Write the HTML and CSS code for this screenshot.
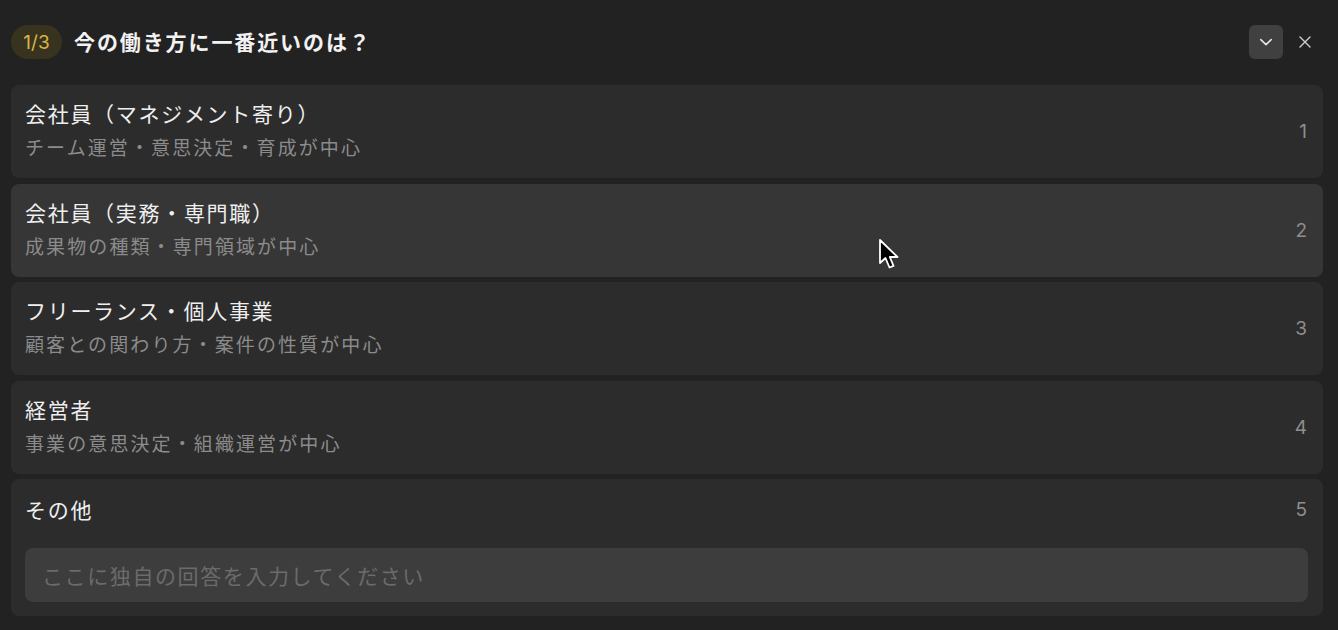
FILE: index.html
```html
<!DOCTYPE html>
<html lang="ja">
<head>
<meta charset="utf-8">
<link rel="stylesheet" href="styles.css">
</head>
<body>
<div class="panel">
  <header class="head">
    <span class="badge">1/3</span>
    <h1 class="title">今の働き方に一番近いのは？</h1>
    <button class="iconbtn chev" aria-label="collapse">
      <svg width="16" height="16" viewBox="0 0 16 16"><path d="M2.8 5.6 L8 10.6 L13.2 5.6" fill="none" stroke="#e6e6e6" stroke-width="1.6" stroke-linecap="round" stroke-linejoin="round"/></svg>
    </button>
    <button class="iconbtn close" aria-label="close">
      <svg width="14" height="14" viewBox="0 0 14 14"><path d="M2 2 L12 12 M12 2 L2 12" fill="none" stroke="#cfcfcf" stroke-width="1.4" stroke-linecap="round"/></svg>
    </button>
  </header>
  <div class="options">
    <div class="opt">
      <div class="txt"><div class="ot">会社員（マネジメント寄り）</div><div class="os">チーム運営・意思決定・育成が中心</div></div>
      <span class="num">1</span>
    </div>
    <div class="opt hover">
      <div class="txt"><div class="ot">会社員（実務・専門職）</div><div class="os">成果物の種類・専門領域が中心</div></div>
      <span class="num">2</span>
    </div>
    <div class="opt">
      <div class="txt"><div class="ot">フリーランス・個人事業</div><div class="os">顧客との関わり方・案件の性質が中心</div></div>
      <span class="num">3</span>
    </div>
    <div class="opt">
      <div class="txt"><div class="ot">経営者</div><div class="os">事業の意思決定・組織運営が中心</div></div>
      <span class="num">4</span>
    </div>
    <div class="opt other">
      <div class="otherrow"><div class="ot">その他</div><span class="num">5</span></div>
      <input class="field" type="text" placeholder="ここに独自の回答を入力してください">
    </div>
  </div>
</div>
<svg class="cursor" width="24" height="34" viewBox="0 0 24 34"><path d="M2 2 L2 25 L7.5 20 L11.5 29.5 L15.5 27.8 L11.8 19 L19.5 19 Z" fill="#000" stroke="#fff" stroke-width="1.8" stroke-linejoin="round"/></svg>
</body>
</html>
```
FILE: styles.css
```css
html, body { margin: 0; padding: 0; }
body {
  background: #222222;
  font-family: "Noto Sans CJK JP", "Noto Sans", sans-serif;
  color: #ececec;
  width: 1338px;
  height: 630px;
  overflow: hidden;
  position: relative;
}
.panel { padding: 25px 15px 0 11px; }
.head {
  display: flex;
  align-items: center;
  height: 34px;
  gap: 12px;
}
.badge {
  width: 51px;
  height: 34px;
  border-radius: 17px;
  background: #38331f;
  color: #d9b545;
  font-family: "Inter", "Noto Sans", sans-serif;
  font-size: 19px;
  display: flex;
  align-items: center;
  justify-content: center;
}
.title {
  margin: 0;
  font-size: 21px;
  font-weight: 700;
  letter-spacing: 1.9px;
  color: #f2f2f2;
  flex: 1;
  margin-top: -2px;
}
.iconbtn {
  border: 0;
  padding: 0;
  display: flex;
  align-items: center;
  justify-content: center;
  background: transparent;
}
.chev { width: 34px; height: 34px; border-radius: 6px; background: #404040; }
.close { width: 24px; height: 34px; margin-left: -2px; margin-right: 6px; }
.options {
  margin-top: 26px;
  display: flex;
  flex-direction: column;
  gap: 5.5px;
}
.opt {
  background: #2c2c2c;
  border-radius: 8px;
  height: 93px;
  box-sizing: border-box;
  padding: 0 16px 0 14px;
  display: flex;
  align-items: center;
}
.opt.hover { background: #363636; }
.txt { flex: 1; margin-top: -3px; }
.ot { font-size: 21px; letter-spacing: 1.7px; line-height: 31px; color: #efefef; }
.os { font-size: 19px; letter-spacing: 2.1px; line-height: 30px; color: #8b8b8b; margin-top: 3px; }
.num { font-family: "Inter", "Noto Sans", sans-serif; font-size: 19px; color: #8e8e8e; }
.opt.other {
  height: 137px;
  flex-direction: column;
  align-items: stretch;
  padding: 15px 15px 14px 14px;
}
.otherrow { display: flex; align-items: center; justify-content: space-between; height: 31px; padding-right: 1px; }
.field {
  margin-top: 23px;
  height: 54px;
  border: 0;
  outline: 0;
  border-radius: 8px;
  background: #3d3d3d;
  padding: 0 17px;
  font-family: "Noto Sans CJK JP", sans-serif;
  font-size: 21px;
  letter-spacing: 1.6px;
  color: #eee;
  box-sizing: border-box;
}
.field::placeholder { color: #6b6b6b; }
.cursor { position: absolute; left: 878px; top: 238px; }
```
